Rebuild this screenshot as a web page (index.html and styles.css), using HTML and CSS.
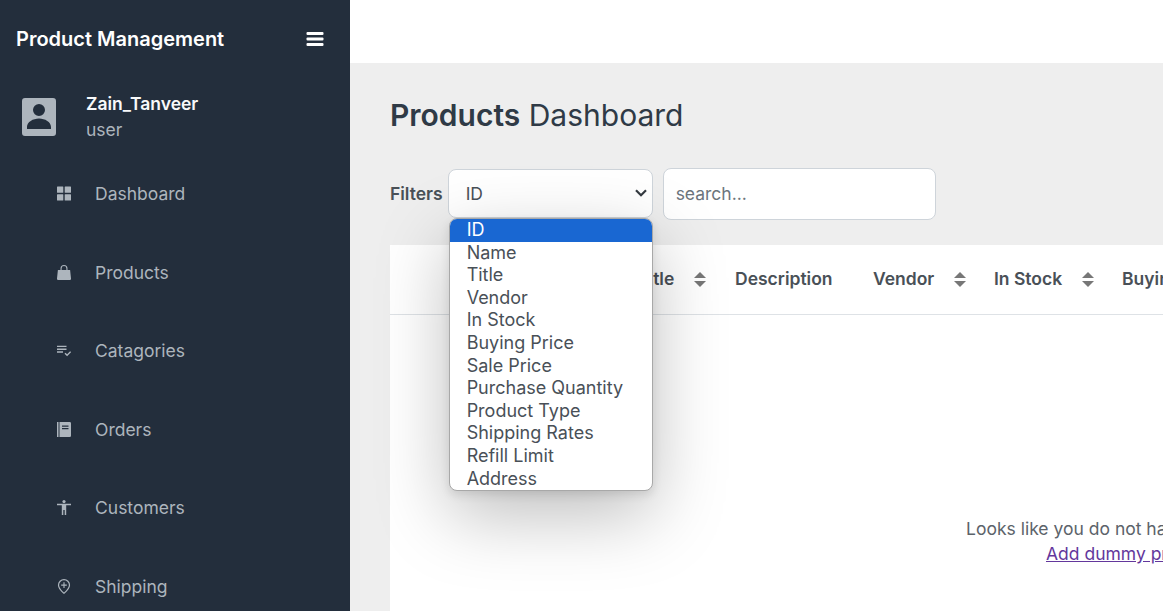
FILE: index.html
```html
<!DOCTYPE html>
<html lang="en">

<head>
    <meta charset="UTF-8">
    <meta name="viewport" content="width=device-width, initial-scale=1">
    <title>Product Management</title>
    <link rel="stylesheet" href="styles.css">
</head>

<body>
    <aside class="sidebar">
        <div class="brand">
            <span class="brand-name">Product Management</span>
            <svg class="brand-toggle" viewBox="0 0 18 16" aria-hidden="true">
                <rect x="0.5" y="1" width="17" height="3" rx="1"/>
                <rect x="0.5" y="6.5" width="17" height="3" rx="1"/>
                <rect x="0.5" y="12" width="17" height="3" rx="1"/>
            </svg>
        </div>

        <div class="profile">
            <svg class="profile-pic" viewBox="0 0 34 38" aria-hidden="true">
                <path fill-rule="evenodd" d="M3 0h28a3 3 0 0 1 3 3v32a3 3 0 0 1-3 3H3a3 3 0 0 1-3-3V3a3 3 0 0 1 3-3zm14 6a6 6 0 1 0 0 12 6 6 0 0 0 0-12zM5 31h24v-2C29 24 23 20.500 17 20.500S5 24 5 29z"/>
            </svg>
            <div>
                <div class="profile-name">Zain_Tanveer</div>
                <div class="profile-role">user</div>
            </div>
        </div>

        <nav class="menu">
            <a class="menu-item" href="#">
                <svg viewBox="0 0 14 14"><rect width="6.300" height="6.300" rx="0.5"/><rect x="7.700" width="6.300" height="6.300" rx="0.5"/><rect y="7.700" width="6.300" height="6.300" rx="0.5"/><rect x="7.700" y="7.700" width="6.300" height="6.300" rx="0.5"/></svg>
                Dashboard
            </a>
            <a class="menu-item" href="#">
                <svg viewBox="0 0 14 15"><path fill-rule="evenodd" d="M7 0a3.500 3.500 0 0 1 3.500 3.500V5h2.600L14 13.500a1.300 1.300 0 0 1-1.300 1.500H1.300A1.300 1.300 0 0 1 0 13.500L.9 5h2.600V3.500A3.500 3.500 0 0 1 7 0zm0 1.100a2.400 2.400 0 0 0-2.400 2.400V5h4.800V3.500A2.400 2.400 0 0 0 7 1.100z"/></svg>
                Products
            </a>
            <a class="menu-item" href="#">
                <svg viewBox="0 0 14 14"><path d="M0 2.200h9.500v1.400H0zM0 5h9.500v1.400H0zM0 7.800h6v1.400H0z"/><path d="M7.500 10.200l1-1 1.600 1.500 3-3 1 1-4 4z"/></svg>
                Catagories
            </a>
            <a class="menu-item" href="#">
                <svg viewBox="0 0 14 15"><path fill-rule="evenodd" d="M2.500 0h10.200A1.300 1.300 0 0 1 14 1.300v12.400a1.300 1.300 0 0 1-1.300 1.300H2.500zM5 3.500v1.200h6.500V3.500zM5 6v1.200h6.500V6zM0 0h1.500v15H0z"/></svg>
                Orders
            </a>
            <a class="menu-item" href="#">
                <svg viewBox="0 0 14 15"><circle cx="7" cy="1.600" r="1.600"/><path d="M0 3.800h14v1.500H9.200V15H7.700v-5H6.300v5H4.800V5.300H0z"/></svg>
                Customers
            </a>
            <a class="menu-item" href="#">
                <svg viewBox="0 0 14 16"><path fill-rule="evenodd" d="M7 0a6.500 6.500 0 0 1 6.500 6.500c0 3.700-3.900 7.700-6.500 9.500C4.400 14.200.5 10.200.5 6.500A6.500 6.500 0 0 1 7 0zm0 1.300a5.200 5.200 0 0 0-5.200 5.200c0 2.800 2.900 6.100 5.200 7.900 2.300-1.800 5.200-5.100 5.200-7.900A5.200 5.200 0 0 0 7 1.300zM6.400 3.500h1.200v2.400H10v1.200H7.600v2.400H6.400V7.100H4V5.900h2.400z"/></svg>
                Shipping
            </a>
        </nav>
    </aside>

    <div class="main">
        <div class="topbar"></div>

        <main class="content">
            <h1 class="page-title"><b>Products</b> Dashboard</h1>

            <div class="filters">
                <label for="filterBy">Filters</label>
                <div class="filter-select">
                    <select id="filterBy">
                        <option>ID</option>
                        <option>Name</option>
                        <option>Title</option>
                        <option>Vendor</option>
                        <option>In Stock</option>
                        <option>Buying Price</option>
                        <option>Sale Price</option>
                        <option>Purchase Quantity</option>
                        <option>Product Type</option>
                        <option>Shipping Rates</option>
                        <option>Refill Limit</option>
                        <option>Address</option>
                    </select>
                    <svg class="select-arrow" viewBox="0 0 12 8" aria-hidden="true">
                        <path d="M1 1.200l5 5 5-5"/>
                    </svg>
                    <ul class="dropdown">
                        <li class="active">ID</li>
                        <li>Name</li>
                        <li>Title</li>
                        <li>Vendor</li>
                        <li>In Stock</li>
                        <li>Buying Price</li>
                        <li>Sale Price</li>
                        <li>Purchase Quantity</li>
                        <li>Product Type</li>
                        <li>Shipping Rates</li>
                        <li>Refill Limit</li>
                        <li>Address</li>
                    </ul>
                </div>
                <input class="search" type="text" placeholder="search...">
            </div>

            <section class="card">
                <table class="products">
                    <colgroup>
                        <col class="col-lead">
                        <col class="col-title">
                        <col class="col-desc">
                        <col class="col-vendor">
                        <col class="col-stock">
                        <col class="col-buying">
                    </colgroup>
                    <thead>
                        <tr>
                            <th></th>
                            <th>Title <span class="sort"></span></th>
                            <th>Description</th>
                            <th>Vendor <span class="sort"></span></th>
                            <th>In Stock <span class="sort"></span></th>
                            <th>Buying Price <span class="sort"></span></th>
                        </tr>
                    </thead>
                </table>

                <div class="empty">
                    <p>Looks like you do not have any products.</p>
                    <a href="#">Add dummy products</a>
                </div>
            </section>
        </main>
    </div>
</body>

</html>
```

FILE: styles.css
```css
html,
body {
    height: 100%;
    overflow: hidden;
}

body {
    margin: 0;
    display: flex;
    font-family: Inter, "Noto Sans", sans-serif;
    font-size: 17.500px;
    color: #495057;
    background: #eee;
}

/* sidebar */
.sidebar {
    flex: 0 0 350px;
    background: #232e3c;
    overflow: hidden;
}

.brand {
    display: flex;
    align-items: center;
    justify-content: space-between;
    height: 78px;
    padding: 0 26px 0 16px;
}

.brand-name {
    font-size: 20px;
    font-weight: 600;
    color: #fff;
}

.brand-toggle {
    width: 18px;
    height: 16px;
    fill: #fff;
}

.profile {
    display: flex;
    align-items: center;
    gap: 30px;
    padding: 12px 22px 0;
}

.profile-pic {
    width: 34px;
    height: 38px;
    fill: #adb5bd;
}

.profile-name {
    padding-top: 1px;
    font-weight: 600;
    line-height: 26px;
    color: #f8f9fa;
}

.profile-role {
    line-height: 26px;
    color: #adb5bd;
}

.menu {
    margin-top: 11.500px;
}

.menu-item {
    display: flex;
    align-items: center;
    gap: 24px;
    height: 78.500px;
    padding-left: 57px;
    color: #adb5bd;
    text-decoration: none;
}

.menu-item svg {
    width: 14px;
    height: 15px;
    flex: none;
    fill: #adb5bd;
}

/* main area */
.main {
    flex: 1;
    min-width: 0;
    overflow: hidden;
}

.topbar {
    height: 63px;
    background: #fff;
}

.content {
    padding: 0 0 0 40px;
}

.page-title {
    margin: 0;
    padding-top: 33px;
    font-size: 30px;
    font-weight: 400;
    line-height: 38px;
    color: #2f3a46;
}

.page-title b {
    font-weight: 600;
}

.filters {
    display: flex;
    align-items: center;
    margin-top: 34px;
}

.filters label {
    margin-right: 5px;
    padding-bottom: 2px;
    font-weight: 600;
}

.filter-select {
    position: relative;
    margin: 0 10px 1px 0;
}

.filter-select select {
    display: block;
    width: 205px;
    height: 49px;
    padding: 0 30px 0 17px;
    font: inherit;
    color: #495057;
    background: #fff;
    border: 1px solid #ced4da;
    border-radius: 8px;
    appearance: none;
}

.select-arrow {
    position: absolute;
    top: 20px;
    right: 6px;
    width: 12px;
    height: 8px;
    fill: none;
    stroke: #343a40;
    stroke-width: 2.200;
    pointer-events: none;
}

.dropdown {
    position: absolute;
    top: 49px;
    left: 1px;
    z-index: 5;
    width: 202px;
    margin: 0;
    padding: 0;
    list-style: none;
    overflow: hidden;
    font-size: 18px;
    line-height: 22.600px;
    color: #495057;
    background: #fff;
    border: 1px solid #a8a8a8;
    border-radius: 8px;
    box-shadow: 0 4px 10px rgba(0, 0, 0, 0.1), 0 24px 72px rgba(0, 0, 0, 0.26);
}

.dropdown li {
    padding-left: 17px;
}

.dropdown .active {
    color: #fff;
    background: #1967d2;
}

.search {
    width: 273px;
    height: 52px;
    box-sizing: border-box;
    padding: 0 12px 2px;
    font: inherit;
    background: #fff;
    border: 1px solid #ced4da;
    border-radius: 8px;
}

.search::placeholder {
    color: #6c757d;
}

/* table card */
.card {
    width: 1490px;
    height: 400px;
    margin-top: 25px;
    background: #fff;
}

.products {
    width: 900px;
    table-layout: fixed;
    border-collapse: collapse;
}

.col-lead { width: 232.500px; }
.col-title { width: 98px; }
.col-desc { width: 138px; }
.col-vendor { width: 121px; }
.col-stock { width: 128px; }
.col-buying { width: 182.500px; }

.products th {
    height: 67px;
    padding: 0 14.500px 2px;
    font-weight: 600;
    text-align: left;
    white-space: nowrap;
    border-bottom: 1px solid #dee2e6;
}

.sort {
    display: inline-block;
    position: relative;
    width: 12px;
    height: 15px;
    margin-left: 15px;
    vertical-align: -2px;
}

.sort::before,
.sort::after {
    content: "";
    position: absolute;
    left: 0;
    border-left: 6px solid transparent;
    border-right: 6px solid transparent;
}

.sort::before {
    top: 0;
    border-bottom: 6px solid #777;
}

.sort::after {
    bottom: 0;
    border-top: 6px solid #777;
}

.empty {
    margin-top: 201px;
    text-align: center;
    line-height: 25px;
    color: #5c636a;
}

.empty p {
    margin: 0;
}

.empty a {
    color: #63379c;
}
```
